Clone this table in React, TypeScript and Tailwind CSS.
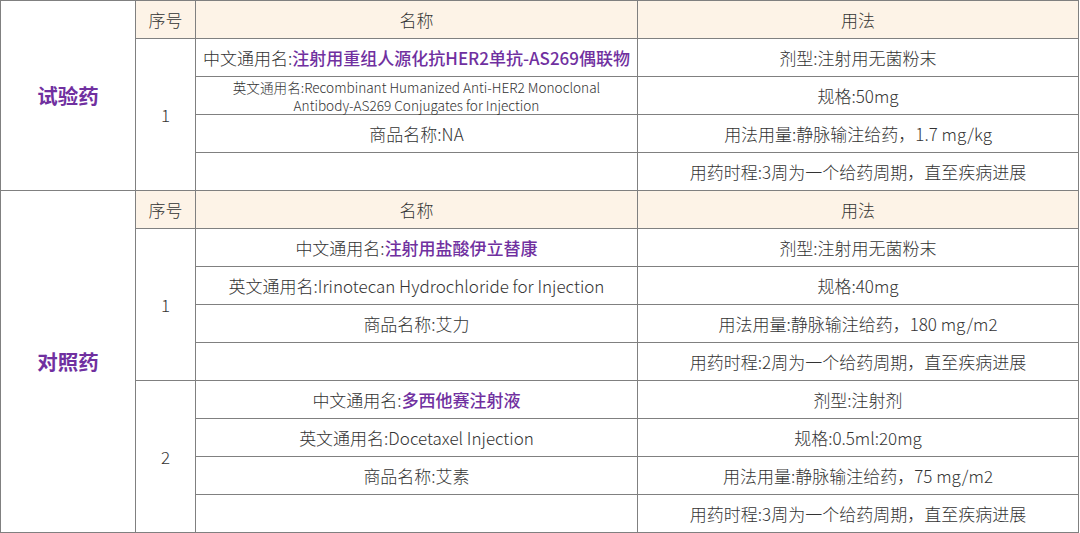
import React from "react";

const font = { fontFamily: '"Noto Sans CJK SC", "Noto Sans", sans-serif' };

function Cell({ className = "", children }: { className?: string; children?: React.ReactNode }) {
  return (
    <div className={`bg-white flex items-center justify-center text-center text-[17px] font-light text-[#333333] ${className}`}>
      {children}
    </div>
  );
}

function Head({ className = "", children }: { className?: string; children?: React.ReactNode }) {
  return (
    <div className={`bg-[#fdf3e7] flex items-center justify-center text-[17px] font-light text-[#333333] ${className}`}>
      {children}
    </div>
  );
}

const P = ({ children }: { children: React.ReactNode }) => (
  <span className="text-[#7030a0] font-medium">{children}</span>
);

export default function App() {
  return (
    <div className="w-[1080px] h-[533px] bg-white" style={font}>
      <div className="grid w-[1079px] grid-cols-[134px_59px_441px_440px] grid-rows-[repeat(14,37px)] gap-px bg-[#808080] border border-[#808080]">
        {/* Section 1 */}
        <Cell className="col-start-1 row-start-1 row-span-5 !text-[20.5px] !font-bold !text-[#7030a0]">试验药</Cell>
        <Head className="col-start-2 row-start-1">序号</Head>
        <Head className="col-start-3 row-start-1">名称</Head>
        <Head className="col-start-4 row-start-1">用法</Head>

        <Cell className="col-start-2 row-start-2 row-span-4">1</Cell>
        <Cell className="col-start-3 row-start-2">
          <span>中文通用名:<P>注射用重组人源化抗HER2单抗-AS269偶联物</P></span>
        </Cell>
        <Cell className="col-start-4 row-start-2">剂型:注射用无菌粉末</Cell>
        <Cell className="col-start-3 row-start-3 !text-[13.6px] leading-[18px] px-5">
          英文通用名:Recombinant Humanized Anti-HER2 Monoclonal Antibody-AS269 Conjugates for Injection
        </Cell>
        <Cell className="col-start-4 row-start-3">规格:50mg</Cell>
        <Cell className="col-start-3 row-start-4">商品名称:NA</Cell>
        <Cell className="col-start-4 row-start-4">用法用量:静脉输注给药，1.7 mg/kg</Cell>
        <Cell className="col-start-3 row-start-5"></Cell>
        <Cell className="col-start-4 row-start-5">用药时程:3周为一个给药周期，直至疾病进展</Cell>

        {/* Section 2 */}
        <Cell className="col-start-1 row-start-6 row-span-9 !text-[20.5px] !font-bold !text-[#7030a0]">对照药</Cell>
        <Head className="col-start-2 row-start-6">序号</Head>
        <Head className="col-start-3 row-start-6">名称</Head>
        <Head className="col-start-4 row-start-6">用法</Head>

        <Cell className="col-start-2 row-start-7 row-span-4">1</Cell>
        <Cell className="col-start-3 row-start-7">
          <span>中文通用名:<P>注射用盐酸伊立替康</P></span>
        </Cell>
        <Cell className="col-start-4 row-start-7">剂型:注射用无菌粉末</Cell>
        <Cell className="col-start-3 row-start-8">英文通用名:Irinotecan Hydrochloride for Injection</Cell>
        <Cell className="col-start-4 row-start-8">规格:40mg</Cell>
        <Cell className="col-start-3 row-start-9">商品名称:艾力</Cell>
        <Cell className="col-start-4 row-start-9">用法用量:静脉输注给药，180 mg/m2</Cell>
        <Cell className="col-start-3 row-start-10"></Cell>
        <Cell className="col-start-4 row-start-10">用药时程:2周为一个给药周期，直至疾病进展</Cell>

        <Cell className="col-start-2 row-start-11 row-span-4">2</Cell>
        <Cell className="col-start-3 row-start-11">
          <span>中文通用名:<P>多西他赛注射液</P></span>
        </Cell>
        <Cell className="col-start-4 row-start-11">剂型:注射剂</Cell>
        <Cell className="col-start-3 row-start-12">英文通用名:Docetaxel Injection</Cell>
        <Cell className="col-start-4 row-start-12">规格:0.5ml:20mg</Cell>
        <Cell className="col-start-3 row-start-13">商品名称:艾素</Cell>
        <Cell className="col-start-4 row-start-13">用法用量:静脉输注给药，75 mg/m2</Cell>
        <Cell className="col-start-3 row-start-14"></Cell>
        <Cell className="col-start-4 row-start-14">用药时程:3周为一个给药周期，直至疾病进展</Cell>
      </div>
    </div>
  );
}
